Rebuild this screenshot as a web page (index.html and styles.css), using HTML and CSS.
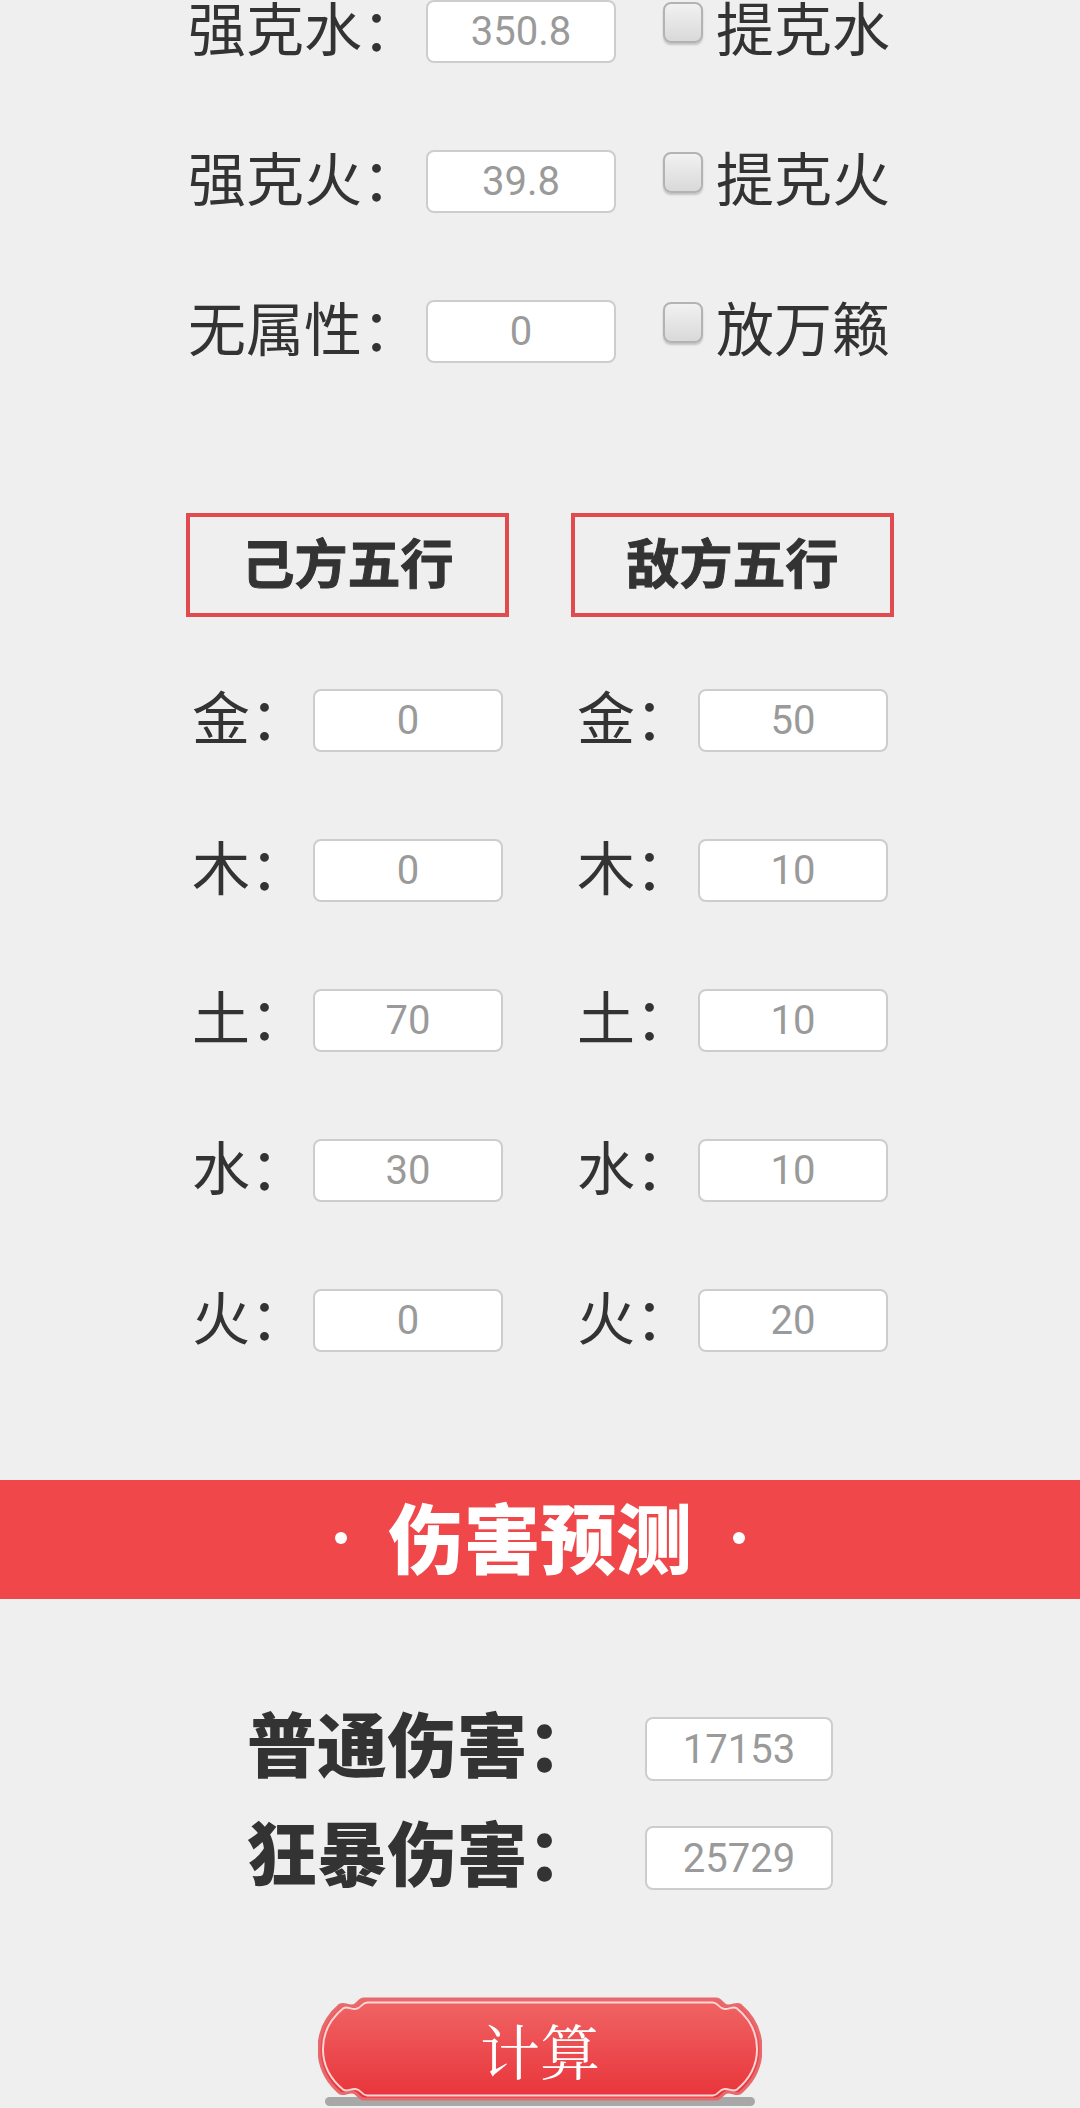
FILE: index.html
```html
<!DOCTYPE html>
<html lang="zh-CN">
<head>
<meta charset="utf-8">
<title>伤害计算</title>
<link rel="stylesheet" href="styles.css">
</head>
<body>
<div class="page">
  <section class="attrs">
    <div class="arow">
      <span class="lbl">强克水：</span>
      <input class="num" type="text" value="350.8" readonly>
      <input class="chk" type="checkbox">
      <span class="lbl">提克水</span>
    </div>
    <div class="arow">
      <span class="lbl">强克火：</span>
      <input class="num" type="text" value="39.8" readonly>
      <input class="chk" type="checkbox">
      <span class="lbl">提克火</span>
    </div>
    <div class="arow">
      <span class="lbl">无属性：</span>
      <input class="num" type="text" value="0" readonly>
      <input class="chk" type="checkbox">
      <span class="lbl">放万籁</span>
    </div>
  </section>

  <section class="sides">
    <div class="heads">
      <div class="head"><span>己方五行</span></div>
      <div class="head"><span>敌方五行</span></div>
    </div>
    <div class="grid">
      <div class="grow">
        <div class="cell"><span class="lbl">金：</span><input class="num" type="text" value="0" readonly></div>
        <div class="cell"><span class="lbl">金：</span><input class="num" type="text" value="50" readonly></div>
      </div>
      <div class="grow">
        <div class="cell"><span class="lbl">木：</span><input class="num" type="text" value="0" readonly></div>
        <div class="cell"><span class="lbl">木：</span><input class="num" type="text" value="10" readonly></div>
      </div>
      <div class="grow">
        <div class="cell"><span class="lbl">土：</span><input class="num" type="text" value="70" readonly></div>
        <div class="cell"><span class="lbl">土：</span><input class="num" type="text" value="10" readonly></div>
      </div>
      <div class="grow">
        <div class="cell"><span class="lbl">水：</span><input class="num" type="text" value="30" readonly></div>
        <div class="cell"><span class="lbl">水：</span><input class="num" type="text" value="10" readonly></div>
      </div>
      <div class="grow">
        <div class="cell"><span class="lbl">火：</span><input class="num" type="text" value="0" readonly></div>
        <div class="cell"><span class="lbl">火：</span><input class="num" type="text" value="20" readonly></div>
      </div>
    </div>
  </section>

  <div class="banner">
    <span class="dot"></span>
    <span class="btitle">伤害预测</span>
    <span class="dot"></span>
  </div>

  <section class="results">
    <div class="rrow">
      <span class="rlbl">普通伤害：</span>
      <input class="num rnum" type="text" value="17153" readonly>
    </div>
    <div class="rrow">
      <span class="rlbl">狂暴伤害：</span>
      <input class="num rnum" type="text" value="25729" readonly>
    </div>
  </section>

  <div class="btnwrap">
    <button class="calc" type="button">
      <svg class="calc-bg" viewBox="0 0 444 111" width="444" height="111" aria-hidden="true">
        <defs>
          <linearGradient id="btnGrad" x1="0" y1="0" x2="0" y2="1">
            <stop offset="0" stop-color="#f06565"/>
            <stop offset="1" stop-color="#e8343a"/>
          </linearGradient>
        </defs>
        <rect x="7" y="100" width="430" height="9" rx="4.5" fill="#a8a8a8"/>
        <path d="M46,2 H398 C404,2 404,9 410,9 C416,9 418,6 422,8 Q443,26 443,52 Q443,78 422,96 C418,98 416,95 410,95 C404,95 404,102 398,102 H46 C40,102 40,95 34,95 C28,95 26,98 22,96 Q1,78 1,52 Q1,26 22,8 C26,6 28,9 34,9 C40,9 40,2 46,2 Z" fill="url(#btnGrad)" stroke="#e66a6d" stroke-width="3"/>
        <path d="M46,2 H398 C404,2 404,9 410,9 C416,9 418,6 422,8 Q443,26 443,52 Q443,78 422,96 C418,98 416,95 410,95 C404,95 404,102 398,102 H46 C40,102 40,95 34,95 C28,95 26,98 22,96 Q1,78 1,52 Q1,26 22,8 C26,6 28,9 34,9 C40,9 40,2 46,2 Z" fill="none" stroke="#fcd6d6" stroke-width="2" transform="translate(222 52) scale(0.982 0.93) translate(-222 -52)"/>
      </svg>
      <span class="calc-text">计算</span>
    </button>
  </div>
</div>
</body>
</html>
```

FILE: styles.css
```css
html, body {
  margin: 0;
  padding: 0;
  overflow: hidden;
  background: #efefef;
}

.page {
  width: 1080px;
  height: 2108px;
  display: flex;
  flex-direction: column;
  font-family: "Noto Sans CJK SC", "Noto Sans", sans-serif;
  color: #333333;
}

/* ---------- inputs ---------- */
.num {
  box-sizing: border-box;
  width: 190px;
  height: 63px;
  margin: 0;
  padding: 0;
  border: 2px solid #cdcdcd;
  border-radius: 8px;
  background: #ffffff;
  text-align: center;
  font-family: Roboto, "Noto Sans", sans-serif;
  font-size: 40px;
  color: #9a9a9a;
  outline: none;
}

.lbl {
  font-size: 58px;
  line-height: 50px;
  white-space: nowrap;
  margin-bottom: 12px;
}

/* ---------- attribute rows ---------- */
.attrs {
  margin-top: 0;
  display: flex;
  flex-direction: column;
  align-items: center;
  gap: 87px;
}

.arow {
  display: flex;
  align-items: center;
  height: 63px;
  width: 704px;
}

.arow .num {
  margin-left: 6px;
}

.chk {
  -webkit-appearance: none;
  appearance: none;
  box-sizing: border-box;
  width: 40px;
  height: 41px;
  margin: 2px 13px 0 47px;
  align-self: flex-start;
  border: 2px solid #b3b3b3;
  border-radius: 8px;
  background: linear-gradient(#f1f1f1, #d9d9d9);
  box-shadow: 0 2px 2px rgba(0, 0, 0, 0.18);
}

/* ---------- five elements ---------- */
.heads {
  margin-top: 150px;
  display: flex;
  justify-content: center;
  gap: 62px;
}

.head {
  box-sizing: border-box;
  width: 323px;
  height: 104px;
  border: 4px solid #e14b4f;
  display: flex;
  align-items: center;
  justify-content: center;
  font-size: 53px;
  font-weight: 700;
  color: #333333;
}

.head span {
  line-height: 53px;
  margin-bottom: 8px;
  -webkit-text-stroke: 1px #333333;
}

.grid {
  margin-top: 72px;
  display: flex;
  flex-direction: column;
  gap: 87px;
}

.grow {
  display: flex;
  justify-content: center;
  gap: 74px;
  height: 63px;
}

.cell {
  display: flex;
  align-items: center;
}

.cell .num {
  margin-left: 5px;
}

/* ---------- banner ---------- */
.banner {
  margin-top: 128px;
  height: 120px;
  background: #f0474a;
  display: flex;
  align-items: center;
  justify-content: center;
  gap: 41px;
}

.dot {
  width: 12px;
  height: 12px;
  border-radius: 50%;
  background: #ffffff;
  margin-bottom: 4px;
}

.btitle {
  font-size: 76px;
  line-height: 76px;
  font-weight: 900;
  color: #ffffff;
  margin-bottom: 10px;
}

/* ---------- results ---------- */
.results {
  margin-top: 118px;
  display: flex;
  flex-direction: column;
  gap: 45px;
}

.rrow {
  display: flex;
  justify-content: center;
  align-items: center;
  height: 64px;
}

.rlbl {
  font-size: 70px;
  line-height: 64px;
  font-weight: 900;
  color: #333333;
  white-space: nowrap;
  margin-bottom: 14px;
}

.rnum {
  width: 188px;
  height: 64px;
  margin-left: 48px;
}

/* ---------- button ---------- */
.btnwrap {
  margin-top: 107px;
  display: flex;
  justify-content: center;
}

.calc {
  position: relative;
  width: 444px;
  height: 111px;
  padding: 0;
  border: none;
  background: none;
  display: flex;
  justify-content: center;
  align-items: flex-start;
  cursor: pointer;
}

.calc-bg {
  position: absolute;
  left: 0;
  top: 0;
}

.calc-text {
  position: relative;
  height: 104px;
  line-height: 104px;
  font-family: "Noto Serif CJK SC", "Noto Sans CJK SC", serif;
  font-size: 60px;
  color: #ffffff;
  letter-spacing: 0;
}
```
